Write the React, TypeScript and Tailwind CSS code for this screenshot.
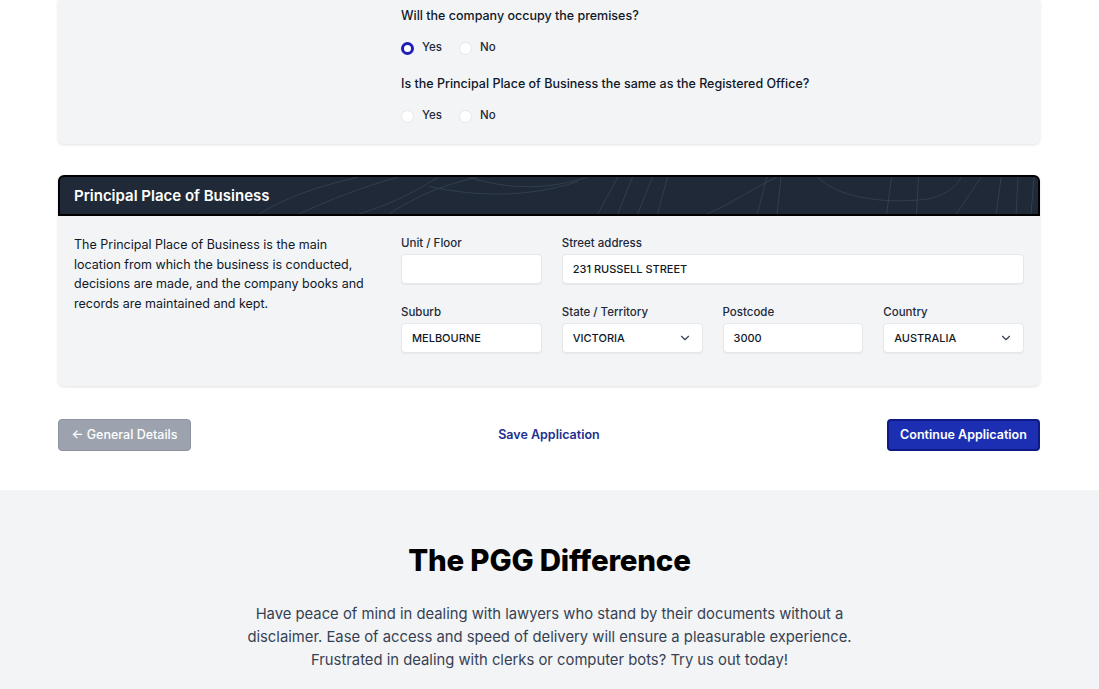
import { ChevronDown } from "lucide-react";

const Radio = ({ checked, label }: { checked?: boolean; label: string }) => (
  <label className="flex items-center gap-2 text-[11.5px] font-medium text-gray-800">
    {checked ? (
      <span className="w-[13px] h-[13px] rounded-full border-[3.5px] border-[#1e1eb8] bg-white" />
    ) : (
      <span className="w-[13px] h-[13px] rounded-full border border-gray-200 bg-white" />
    )}
    {label}
  </label>
);

const Field = ({ label, value, select, className = "" }: { label: string; value?: string; select?: boolean; className?: string }) => (
  <div className={className}>
    <div className="text-[11.5px] font-medium text-gray-800 h-4 leading-4 mb-[3px]">{label}</div>
    <div className="h-[30px] bg-white border border-gray-200 rounded-[4px] shadow-[0_1px_1px_rgba(0,0,0,0.05)] flex items-center justify-between px-[10px] text-[11px] font-medium text-gray-900 uppercase">
      <span>{value}</span>
      {select && <ChevronDown className="w-3.5 h-3.5 text-gray-700" strokeWidth={2} />}
    </div>
  </div>
);

const Topo = () => (
  <svg className="absolute inset-0 w-full h-full" viewBox="0 0 982 40" preserveAspectRatio="none" fill="none" stroke="#3a4555" strokeWidth="0.8">
    <path d="M200 40 C230 20 260 10 300 0" />
    <path d="M240 40 C270 25 300 12 340 0" />
    <path d="M300 40 C330 30 350 20 380 0" />
    <path d="M330 40 C360 20 380 10 420 0" />
    <path d="M370 10 C420 22 470 22 520 5" />
    <path d="M410 0 C450 14 490 14 530 0" />
    <path d="M540 40 L560 0" />
    <path d="M560 40 L575 0" />
    <path d="M580 40 L595 0" />
    <path d="M600 40 L610 0" />
    <path d="M650 40 C680 25 700 10 720 0" />
    <path d="M760 0 C780 20 820 30 870 24 C890 20 900 10 905 0" />
    <path d="M900 40 L925 0" />
    <path d="M700 40 L710 0" />
    <path d="M720 40 L724 0" />
    <path d="M830 40 L835 0" />
    <path d="M860 40 L862 0" />
    <path d="M940 40 L945 0" />
    <path d="M960 40 L962 0" />
    <path d="M975 40 L978 0" />
  </svg>
);

export default function App() {
  return (
    <div className="min-h-screen bg-white" style={{ fontFamily: "Inter, 'Noto Sans', sans-serif" }}>
      <div className="mx-[58px] w-[982px]">
        {/* Top card */}
        <div className="bg-[#f3f4f6] rounded-b-md shadow-[0_1px_3px_rgba(0,0,0,0.12)] pt-[6px] pb-[18px]">
          <div className="pl-[343px]">
            <div className="text-[12.5px] font-medium text-gray-900 leading-5">Will the company occupy the premises?</div>
            <div className="flex gap-[17px] mt-[12px] h-5 items-center">
              <Radio checked label="Yes" />
              <Radio label="No" />
            </div>
            <div className="text-[12.5px] font-medium text-gray-900 leading-5 mt-[16px]">
              Is the Principal Place of Business the same as the Registered Office?
            </div>
            <div className="flex gap-[17px] mt-[12px] h-5 items-center">
              <Radio label="Yes" />
              <Radio label="No" />
            </div>
          </div>
        </div>

        {/* Principal place of business */}
        <div className="mt-[31px] rounded-md shadow-[0_1px_3px_rgba(0,0,0,0.12)] bg-[#f3f4f6]">
          <div className="relative h-[41px] bg-[#1f2937] border-2 border-black rounded-t-md overflow-hidden flex items-center px-[14px]">
            <Topo />
            <h3 className="relative text-[15px] font-semibold text-white translate-y-[1px]">Principal Place of Business</h3>
          </div>
          <div className="grid grid-cols-[295px_1fr] gap-x-[32px] px-4 pt-[19px] pb-[33px]">
            <p className="text-[12.5px] leading-[19.5px] text-gray-900">
              The Principal Place of Business is the main location from which the business is conducted, decisions are made, and the company books and records are maintained and kept.
            </p>
            <div className="grid grid-cols-4 gap-x-5 gap-y-[20px]">
              <Field label="Unit / Floor" value="" />
              <Field label="Street address" value="231 Russell Street" className="col-span-3" />
              <Field label="Suburb" value="Melbourne" />
              <Field label="State / Territory" value="Victoria" select />
              <Field label="Postcode" value="3000" />
              <Field label="Country" value="Australia" select />
            </div>
          </div>
        </div>

        {/* Actions */}
        <div className="mt-[33px] flex items-center justify-between">
          <button className="h-[32px] w-[133px] rounded-[4px] bg-[#9ca3af] border border-[#8c939e] text-white text-[12.5px] font-medium">
            ← General Details
          </button>
          <button className="text-[12.5px] font-semibold text-[#1e2f8f] ml-[20px]">Save Application</button>
          <button className="h-[32px] w-[153px] rounded-[4px] bg-[#1c2fb3] border-2 border-[#0e1a86] text-white text-[12.5px] font-semibold">
            Continue Application
          </button>
        </div>
      </div>

      {/* PGG Difference */}
      <section className="mt-[39px] bg-[#f3f4f6] pt-[53px] pb-10 text-center">
        <h2 className="text-[29.5px] font-extrabold text-black leading-[34px] tracking-[-0.2px]">The PGG Difference</h2>
        <p className="mt-[26px] mx-auto w-[612px] text-[14.8px] leading-[23px] text-gray-700">
          Have peace of mind in dealing with lawyers who stand by their documents without a disclaimer. Ease of access and speed of delivery will ensure a pleasurable experience. Frustrated in dealing with clerks or computer bots? Try us out today!
        </p>
      </section>
    </div>
  );
}
